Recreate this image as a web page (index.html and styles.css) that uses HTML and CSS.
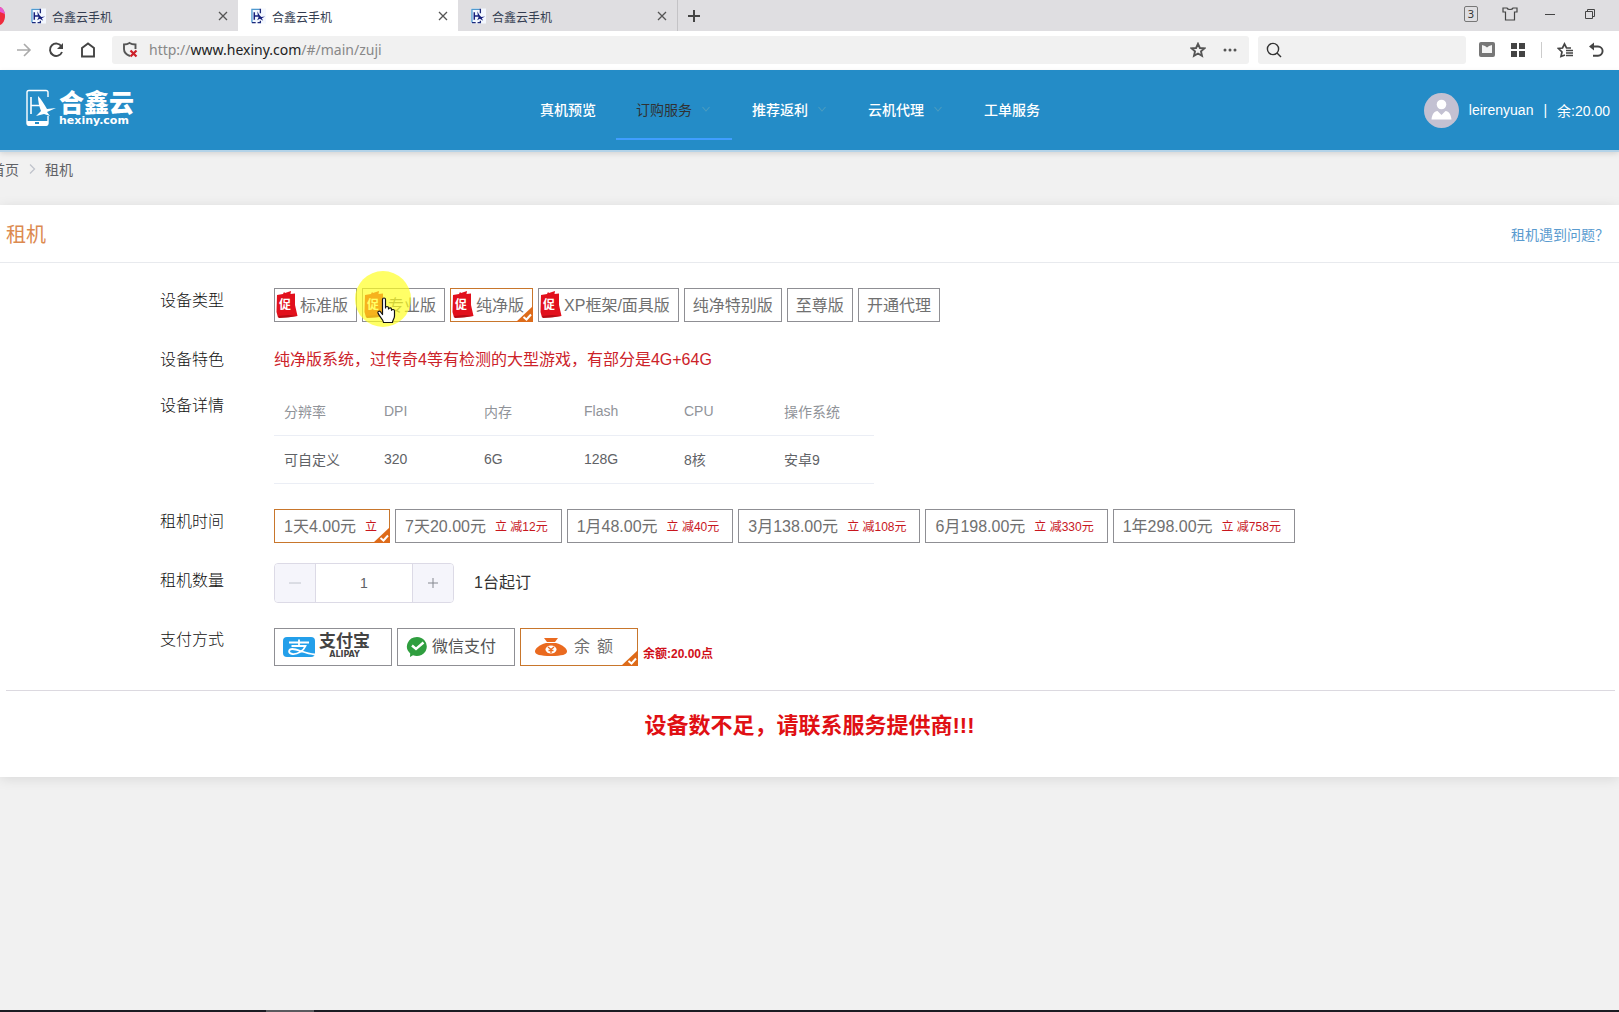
FILE: index.html
```html
<!DOCTYPE html>
<html lang="zh-CN">
<head>
<meta charset="utf-8">
<meta name="viewport" content="width=device-width, initial-scale=1">
<title>合鑫云手机</title>
<link rel="stylesheet" href="styles.css">
</head>
<body>
<svg class="defs" aria-hidden="true">
  <symbol id="favicon" viewBox="0 0 16 16">
    <rect width="16" height="16" fill="#f4f8ff"/>
    <path d="M1 15V1h8" fill="none" stroke="#4f9ad0" stroke-width="1.4"/>
    <path d="M9 1h1v4M1 15h4M7 15h3v-2" fill="none" stroke="#1c2a7c" stroke-width="1.4"/>
    <path d="M3.5 4v8M3.5 8h4" stroke="#16207c" stroke-width="1.6" fill="none"/>
    <path d="M7 3c1 3 2 4.500 4 6l4-.5-3.500 2L13 13l-3.500-2-3 1.500L8 9.500C7 7 6.800 5 7 3z" fill="#16207c"/>
  </symbol>
  <symbol id="close" viewBox="0 0 10 10"><path d="M1 1l8 8M9 1L1 9" stroke="#555" stroke-width="1.3" fill="none"/></symbol>
  <symbol id="chevron" viewBox="0 0 12 12"><path d="M2.500 4l3.500 4 3.500-4" stroke="#4a9cc0" stroke-width="1.100" fill="none"/></symbol>
  <symbol id="promo" viewBox="0 0 22 28">
    <path d="M1 5l6-1 1-2 1 1 6-2-.5 3 4.500-.5L19 15l2.500 11L12 27l-10 .5L.5 22z" fill="#e2101c"/>
    <path d="M2 26l10-1 9 1-9 1.500-9 .5z" fill="#b80c14"/>
    <text x="9" y="19" text-anchor="middle" class="promo-text">促</text>
  </symbol>
  <symbol id="check" viewBox="0 0 17 16">
    <path d="M17 0v16H0z" fill="#dd6b1a"/>
    <path d="M7.500 11l3 2.500 4.500-5" fill="none" stroke="#fff" stroke-width="2"/>
  </symbol>
</svg>

<div class="tabs">
  <svg class="edge-icon" viewBox="0 0 5 18"><path d="M0 0c3 1 5 5 5 9s-2 8-5 9z" fill="#ef2b3d"/><path d="M0 0c3 1 4.500 4 5 7L0 5z" fill="#e85ad0"/></svg>
  <a class="tab tab-first" href="#"><svg class="tab-icon"><use href="#favicon"/></svg><span>合鑫云手机</span><svg class="tab-close"><use href="#close"/></svg></a>
  <a class="tab tab-active" href="#"><svg class="tab-icon"><use href="#favicon"/></svg><span>合鑫云手机</span><svg class="tab-close"><use href="#close"/></svg></a>
  <a class="tab tab-last" href="#"><svg class="tab-icon"><use href="#favicon"/></svg><span>合鑫云手机</span><svg class="tab-close"><use href="#close"/></svg></a>
  <button class="plain new-tab" aria-label="新标签页"><svg width="14" height="14" viewBox="0 0 14 14"><path d="M7 1v12M1 7h12" stroke="#444" stroke-width="2"/></svg></button>
  <div class="window-tools">
    <span class="count">3</span>
    <button class="plain" aria-label="皮肤"><svg width="16" height="14" viewBox="0 0 16 14"><path d="M1 1h4c.5 2 5.500 2 6 0h4v4h-2.500v8h-9V5H1z" fill="none" stroke="#444" stroke-width="1.200"/></svg></button>
    <button class="plain" aria-label="最小化"><svg width="16" height="14" viewBox="0 0 16 14"><path d="M3 7.500h10" stroke="#444"/></svg></button>
    <button class="plain" aria-label="还原"><svg width="16" height="14" viewBox="0 0 16 14"><path d="M3.500 4.500h7v7h-7zM5.500 4.500v-2h7v7h-2" fill="none" stroke="#444"/></svg></button>
  </div>
</div>

<div class="toolbar">
  <button class="plain" aria-label="前进"><svg width="16" height="16" viewBox="0 0 16 16"><path d="M1 8h13M8 2l6 6-6 6" fill="none" stroke="#aaa" stroke-width="1.600"/></svg></button>
  <button class="plain" aria-label="刷新"><svg width="16" height="16" viewBox="0 0 16 16"><path d="M13.500 4.500A6.200 6.200 0 1 0 14 10" fill="none" stroke="#444" stroke-width="1.900"/><path d="M15 1v6H9z" fill="#444"/></svg></button>
  <button class="plain" aria-label="主页"><svg width="16" height="16" viewBox="0 0 16 16"><path d="M2 14.500V6l6-4.500L14 6v8.500z" fill="none" stroke="#444" stroke-width="1.900"/></svg></button>
  <div class="address">
    <svg width="16" height="18" viewBox="0 0 16 18"><path d="M8 15C4 13.500 2 11.500 2 8V3.500C4.500 3.500 6 3 7.500 2 9 3 11 3.500 13.500 3.500V8" fill="none" stroke="#555" stroke-width="1.900"/><path d="M8.500 9.500l6 6M14.500 9.500l-6 6" stroke="#cc2029" stroke-width="2.200"/></svg>
    <span class="url">http://<b>www.hexiny.com</b>/#/main/zuji</span>
    <button class="plain" aria-label="收藏"><svg width="16" height="16" viewBox="0 0 16 16"><path d="M8 1.800l1.900 4.200 4.500.4-3.400 3 1 4.500L8 11.500l-4 2.400 1-4.500-3.400-3 4.500-.4z" fill="none" stroke="#555" stroke-width="1.900"/></svg></button>
    <button class="plain" aria-label="更多"><svg width="16" height="16" viewBox="0 0 16 16"><g fill="#555"><circle cx="3" cy="8" r="1.500"/><circle cx="8" cy="8" r="1.500"/><circle cx="13" cy="8" r="1.500"/></g></svg></button>
  </div>
  <div class="search">
    <svg width="16" height="16" viewBox="0 0 16 16"><circle cx="7" cy="7" r="5.600" fill="none" stroke="#333" stroke-width="1.400"/><path d="M11 11l4 4" stroke="#333" stroke-width="1.400"/></svg>
    <input type="text" aria-label="搜索">
  </div>
  <div class="extensions">
    <button class="plain" aria-label="阅读"><svg width="16" height="16" viewBox="0 0 16 16"><rect width="16" height="15" rx="2" fill="#777"/><path d="M3 3l3 1 2 1.500L10 4l3-1v8H3z" fill="#f4f4f4"/></svg></button>
    <button class="plain" aria-label="应用"><svg width="16" height="16" viewBox="0 0 16 16"><path d="M1 1h6v6H1zM9 1h6v6H9zM1 9h6v6H1zM9 9h6v6H9z" fill="#444"/></svg></button>
    <i class="bar"></i>
    <button class="plain" aria-label="收藏夹"><svg width="16" height="16" viewBox="0 0 16 16"><path d="M8 13l-4 1.500 1-4.500-3.500-3.500 4-.5L7.500 2l2 4H14" fill="none" stroke="#444" stroke-width="1.700"/><path d="M9 8.500h7M9 11h7M9 13.500h7" stroke="#444" stroke-width="1.500"/></svg></button>
    <button class="plain" aria-label="撤销"><svg width="16" height="16" viewBox="0 0 16 16"><path d="M3 4.500h7a4.600 4.600 0 0 1 0 9.200H5" fill="none" stroke="#444" stroke-width="1.900"/><path d="M1 4.500L6 .5v8z" fill="#444"/></svg></button>
  </div>
</div>

<header class="header">
  <a class="logo" href="#">
    <svg width="32" height="38" viewBox="0 0 32 38"><path d="M23 8V3.500Q23 1.500 21 1.500H4Q2 1.500 2 3.500V34q0 2 2 2h17q2 0 2-2v-7" fill="none" stroke="#fff" stroke-width="1.400"/><path d="M2 32h21v3q0 2-2 2H4q-2 0-2-2z" fill="#fff"/><rect x="10" y="33" width="4" height="2" fill="#248cc7"/><path d="M6 8v17M6 16.500h9" stroke="#fff" stroke-width="1.600" fill="none"/><path d="M13 7c3 3 6 8 9 13l9-1-9 4 3 4-6-2-8 2 5-5c-2-5-3-10-3-15z" fill="#fff"/></svg>
    <span class="logo-text"><strong>合鑫云</strong><small>hexiny.com</small></span>
  </a>
  <nav class="nav">
    <a href="#">真机预览</a>
    <a class="active" href="#">订购服务<svg><use href="#chevron"/></svg></a>
    <a href="#">推荐返利<svg><use href="#chevron"/></svg></a>
    <a href="#">云机代理<svg><use href="#chevron"/></svg></a>
    <a href="#">工单服务</a>
  </nav>
  <div class="user">
    <svg width="35" height="35" viewBox="0 0 35 35"><circle cx="17.500" cy="17.500" r="17.500" fill="#c3c1d2"/><circle cx="17.500" cy="11.500" r="4.800" fill="#fff"/><path d="M7.500 26.500c.5-5 2.500-8 6-8.500l4 4 4-4c3.500.5 5.500 3.500 6 8.500z" fill="#fff"/></svg>
    <span>leirenyuan</span><span>|</span><span>余:20.00</span>
  </div>
</header>

<div class="crumbs"><a href="#">首页</a><svg width="12" height="12" viewBox="0 0 12 12"><path d="M4 1.500L8.500 6 4 10.500" fill="none" stroke="#c0c4cc" stroke-width="1.300"/></svg><span>租机</span></div>

<main class="card">
  <div class="card-head"><h1>租机</h1><a href="#">租机遇到问题？</a></div>
  <form class="form">
    <div class="row">
      <span class="label">设备类型</span>
      <div class="options" role="radiogroup" aria-label="设备类型">
        <label class="option promo"><input type="radio" name="type"><svg class="tag"><use href="#promo"/></svg>标准版</label>
        <label class="option promo hovered"><input type="radio" name="type"><svg class="tag"><use href="#promo"/></svg>专业版
          <svg class="pointer" viewBox="0 0 56 56"><circle cx="28" cy="28" r="28" fill="#ffff1e" fill-opacity=".68"/><path d="M27.500 28.500c0-2 3-2 3 0V37c0-2 3-2 3 0v1c.500-1.500 3-1.500 3 .3v1c.5-1.300 3-1 3 .7v5c0 3-2 4-2 6.500h-9c0-3-4.500-6-5.500-9.500-.5-2 2-2.500 3-.5l1.500 2z" fill="#fff" stroke="#111" stroke-width="1.200" stroke-linejoin="round"/></svg></label>
        <label class="option promo"><input type="radio" name="type" checked><svg class="tag"><use href="#promo"/></svg>纯净版<svg class="check"><use href="#check"/></svg></label>
        <label class="option promo"><input type="radio" name="type"><svg class="tag"><use href="#promo"/></svg>XP框架/面具版</label>
        <label class="option"><input type="radio" name="type">纯净特别版</label>
        <label class="option"><input type="radio" name="type">至尊版</label>
        <label class="option"><input type="radio" name="type">开通代理</label>
      </div>
    </div>
    <div class="row row-feature">
      <span class="label">设备特色</span>
      <p class="feature">纯净版系统，过传奇4等有检测的大型游戏，有部分是4G+64G</p>
    </div>
    <div class="row row-detail">
      <span class="label">设备详情</span>
      <table class="specs">
        <thead><tr><th>分辨率</th><th>DPI</th><th>内存</th><th>Flash</th><th>CPU</th><th>操作系统</th></tr></thead>
        <tbody><tr><td>可自定义</td><td>320</td><td>6G</td><td>128G</td><td>8核</td><td>安卓9</td></tr></tbody>
      </table>
    </div>
    <div class="row">
      <span class="label">租机时间</span>
      <div class="options" role="radiogroup" aria-label="租机时间">
        <label class="option plan plan-short"><input type="radio" name="plan" checked>1天4.00元<em>立</em><svg class="check"><use href="#check"/></svg></label>
        <label class="option plan"><input type="radio" name="plan">7天20.00元<em>立 减12元</em></label>
        <label class="option plan"><input type="radio" name="plan">1月48.00元<em>立 减40元</em></label>
        <label class="option plan"><input type="radio" name="plan">3月138.00元<em>立 减108元</em></label>
        <label class="option plan"><input type="radio" name="plan">6月198.00元<em>立 减330元</em></label>
        <label class="option plan"><input type="radio" name="plan">1年298.00元<em>立 减758元</em></label>
      </div>
    </div>
    <div class="row">
      <label class="label" for="count">租机数量</label>
      <div class="quantity">
        <div class="stepper">
          <button type="button" class="minus" aria-label="减少" disabled><svg width="14" height="14" viewBox="0 0 14 14"><path d="M1 7h12" stroke="#c0c4cc"/></svg></button>
          <input id="count" type="text" value="1">
          <button type="button" aria-label="增加"><svg width="14" height="14" viewBox="0 0 14 14"><path d="M7 2v10M2 7h10" stroke="#85888f"/></svg></button>
        </div>
        <span class="minimum">1台起订</span>
      </div>
    </div>
    <div class="row">
      <span class="label">支付方式</span>
      <div class="options options-pay" role="radiogroup" aria-label="支付方式">
        <label class="option pay"><input type="radio" name="pay"><svg width="32" height="20" viewBox="0 0 32 20"><rect width="32" height="20" rx="4" fill="#239fea"/><path d="M6 5.500h20M16 2.500v6M8.500 9h14c-2 5-8 8.500-13 8-5-.8-4-5 0-5 5 0 12 4.500 22.500 5.500" fill="none" stroke="#fff" stroke-width="1.800"/></svg><span class="alipay"><b>支付宝</b><small>ALIPAY</small></span></label>
        <label class="option pay"><input type="radio" name="pay"><svg width="22" height="22" viewBox="0 0 22 22"><path d="M11 1a10 9.500 0 1 1-4 18.300L4 21l.2-3.500A10 9.500 0 0 1 11 1z" fill="#2f9e3f"/><path d="M6 9.500l4 3.500 7.500-6.500" fill="none" stroke="#fff" stroke-width="2.400"/></svg><span class="wechat">微信支付</span></label>
        <label class="option pay pay-balance"><input type="radio" name="pay" checked><svg width="32" height="18" viewBox="0 0 32 18"><path d="M9 0h14l-3 4h-8z" fill="#ea6a1f"/><path d="M11 5h10c7 2 11 5.500 11 8.500S27 18 16 18 0 16.500 0 13.500 4 7 11 5z" fill="#ea6a1f"/><ellipse cx="16" cy="11.500" rx="5.500" ry="4" fill="#fff"/><path d="M13 9l3 2.500L19 9M16 11v4M13.500 12.500h5" stroke="#ea6a1f" stroke-width="1.300" fill="none"/></svg><span class="balance-name">余</span><span class="balance-name">额</span><svg class="check"><use href="#check"/></svg></label>
        <strong class="balance">余额:20.00点</strong>
      </div>
    </div>
  </form>
  <p class="notice">设备数不足，请联系服务提供商!!!</p>
</main>
<div class="taskbar"><i></i></div>
</body>
</html>
```

FILE: styles.css
```css
* { box-sizing: border-box; }

body {
  margin: 0;
  min-height: 100vh;
  display: flex;
  flex-direction: column;
  overflow-x: hidden;
  background: #f1f1f1;
  color: #333;
  font-family: "Liberation Sans", "Noto Sans CJK SC", sans-serif;
  font-size: 14px;
}

a { color: inherit; text-decoration: none; }
svg { display: block; flex: none; }
.defs { position: absolute; width: 0; height: 0; }
.plain { display: flex; padding: 0; border: 0; background: none; }

/* browser tabs */
.tabs { display: flex; align-items: stretch; height: 31px; background: #dfdee1; }
.edge-icon { width: 5px; height: 18px; margin-top: 7px; }
.tab {
  display: flex;
  align-items: center;
  gap: 6px;
  width: 220px;
  padding: 1px 10px 0 13px;
  color: #333c50;
  font-size: 12px;
}
.tab-first { width: 233px; padding-left: 26px; }
.tab-active { background: #fff; }
.tab-last { border-right: 1px solid #c4c3c6; }
.tab-icon { width: 15px; height: 16px; }
.tab-close { width: 10px; height: 10px; margin-left: auto; }
.new-tab { align-items: center; padding: 1px 9px 0; }
.window-tools { display: flex; align-items: center; gap: 24px; margin-left: auto; padding: 0 21px 3px 0; }
.count {
  width: 14px;
  height: 16px;
  border: 1px solid #777;
  border-radius: 2px;
  color: #333;
  font: 11px/14px "Noto Sans", sans-serif;
  text-align: center;
}

/* browser toolbar */
.toolbar { display: flex; align-items: center; gap: 16px; height: 39px; padding: 0 15px 1px 16px; background: #fff; }
.address, .search { display: flex; align-items: center; height: 28px; border-radius: 3px; background: #f1f1f1; }
.address { flex: 1; gap: 16px; padding: 0 11px 0 10px; margin-right: -7px; }
.url { flex: 1; margin-left: -5px; color: #888; font: 14px/20px "Noto Sans", sans-serif; }
.url b { color: #222; font-weight: 400; }
.search { width: 208px; padding-left: 8px; }
.search input { flex: 1; min-width: 0; border: 0; background: none; }
.extensions { display: flex; align-items: center; gap: 15px; margin-left: -3px; }
.bar { width: 1px; height: 16px; background: #ccc; }

/* site header */
.header {
  display: flex;
  align-items: center;
  height: 80px;
  padding-right: 9px;
  background: #248cc7;
  color: #fff;
  box-shadow: 0 2px 0 #b4d3e8, 0 3px 6px rgba(0, 0, 0, .15);
}
.logo { display: flex; align-items: center; gap: 2px; width: 520px; padding: 0 0 4px 25px; }
.logo-text { display: flex; flex-direction: column; padding-top: 2px; }
.logo-text strong { font-size: 25px; line-height: 24px; font-weight: 900; }
.logo-text small { font: bold 11px/12px "DejaVu Sans", sans-serif; }
.nav { display: flex; font-weight: 500; }
.nav a { display: flex; align-items: center; gap: 8px; height: 60px; padding: 0 20px; border-bottom: 2px solid transparent; }
.nav svg { width: 12px; height: 12px; }
.nav .active { border-color: #409eff; color: #303133; font-weight: 400; }
.user { display: flex; align-items: center; gap: 10px; margin-left: auto; }

.crumbs { display: flex; align-items: center; gap: 7px; height: 55px; padding: 0 0 17px; margin-left: -9px; color: #606266; }

/* card */
.card { background: #fff; box-shadow: 0 2px 12px rgba(0, 0, 0, .1); }
.card-head {
  display: flex;
  align-items: center;
  justify-content: space-between;
  height: 58px;
  padding: 0 10px 0 6px;
  border-bottom: 1px solid #e8eaee;
}
.card-head h1 { margin: 0; color: #dc8a50; font-size: 20px; font-weight: 400; }
.card-head a { color: #5a9bcf; }

.form { margin: 0 4px 0 6px; padding: 18px 0 11px 154px; border-bottom: 1px solid #dcd9e0; }
.row { display: flex; min-height: 59px; font-size: 16px; }
.row-feature { min-height: 46px; }
.row-detail { min-height: 116px; }
.label { width: 114px; line-height: 40px; font-weight: 300; color: #111; }

.options { display: flex; flex-wrap: wrap; gap: 5px; padding-top: 7px; }
.options-pay { padding-top: 8px; }
.option {
  position: relative;
  display: flex;
  align-items: center;
  height: 34px;
  padding: 0 8px 2px;
  border: 1px solid #8f8f94;
  color: #707070;
  white-space: nowrap;
}
.option input { position: absolute; opacity: 0; width: 0; height: 0; margin: 0; }
.option:has(:checked) { border-color: #c8762c; }
.promo { gap: 2px; padding: 0 8px 2px 1px; }
.tag { width: 22px; height: 28px; }
.promo-text { fill: #fff; font-size: 12px; font-weight: 700; }
.check { position: absolute; right: -1px; bottom: -1px; width: 17px; height: 16px; }
.hovered { z-index: 1; }
.pointer { position: absolute; left: -8px; top: -18px; width: 56px; height: 56px; overflow: visible; }

.feature { margin: 0; color: #cc2229; line-height: 40px; }

.specs { width: 600px; height: 96px; margin-top: 1px; table-layout: fixed; border-collapse: collapse; font-size: 14px; align-self: flex-start; }
.specs th, .specs td { height: 48px; padding: 0 10px; border-bottom: 1px solid #ebeef5; text-align: left; font-weight: 400; color: #606266; }
.specs th { color: #909399; }

.plan { gap: 9px; padding: 0 13px 2px 9px; }
.plan em { color: #c8161d; font-size: 12px; font-style: normal; }
.plan-short { width: 116px; }

.quantity { display: flex; align-items: center; gap: 20px; height: 40px; margin-top: 2px; }
.minimum { line-height: 40px; }
.stepper { display: flex; width: 180px; height: 40px; border: 1px solid #dcdae6; border-radius: 4px; overflow: hidden; }
.stepper button { display: flex; align-items: center; justify-content: center; width: 41px; padding: 0; border: 0; border-left: 1px solid #dcdae6; background: #f5f5fb; }
.stepper .minus { border-left: 0; border-right: 1px solid #dcdae6; }
.stepper input { flex: 1; min-width: 0; border: 0; color: #606266; font: 14px "Liberation Sans", sans-serif; text-align: center; }

.pay { width: 118px; height: 38px; gap: 4px; padding-bottom: 0; }
.alipay { display: flex; flex-direction: column; color: #444; }
.alipay b { font-size: 17px; line-height: 16px; font-weight: 700; }
.alipay small { font: bold 8px/10px "DejaVu Sans", sans-serif; text-align: center; }
.wechat { font-size: 16px; line-height: 20px; color: #555; }
.pay-balance { gap: 7px; padding-left: 14px; }
.balance-name { font-size: 16px; line-height: 16px; }
.balance { align-self: center; color: #d0101a; font-size: 12px; line-height: 20px; }

.notice { margin: 0; padding: 20px 0 36px; color: #e01014; font-size: 22px; line-height: 30px; font-weight: 700; text-align: center; }

.taskbar { height: 2px; margin-top: auto; padding-left: 266px; background: #1b1b22; }
.taskbar i { display: block; width: 48px; height: 2px; background: #5a5a5e; }
```
